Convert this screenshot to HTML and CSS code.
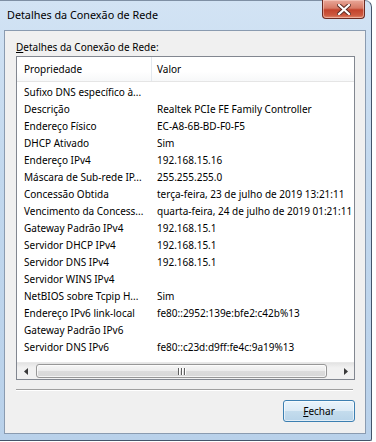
FILE: index.html
```html
<!DOCTYPE html>
<html lang="pt">
<head>
    <meta charset="UTF-8">
    <meta name="viewport" content="width=device-width, initial-scale=1.0">
    <title>Detalhes da Conexão de Rede</title>
    <link rel="stylesheet" href="styles.css">
</head>
<body>
    <div class="window">
        <div class="titlebar">
            <span class="title">Detalhes da Conexão de Rede</span>
            <div class="close-btn">
                <svg width="14" height="11" viewBox="0 0 14 11">
                    <path d="M2 1 L12 10 M12 1 L2 10" stroke="#5a2a22" stroke-width="4" stroke-linecap="square"/>
                    <path d="M2 1 L12 10 M12 1 L2 10" stroke="#ffffff" stroke-width="2.2" stroke-linecap="square"/>
                </svg>
            </div>
        </div>
        <div class="client">
            <div class="label"><u>D</u>etalhes da Conexão de Rede:</div>
            <div class="listbox">
                <div class="list-header">
                    <div class="col-prop">Propriedade</div>
                    <div class="col-val">Valor</div>
                </div>
                <div class="list-rows" id="rows"></div>
                <div class="hscroll">
                    <div class="arrow">
                        <svg width="4" height="7" viewBox="0 0 4 7"><path d="M4 0 L0 3.5 L4 7 Z" fill="#3a3a3a"/></svg>
                    </div>
                    <div class="track">
                        <div class="thumb">
                            <span class="grip"></span><span class="grip"></span><span class="grip"></span>
                        </div>
                    </div>
                    <div class="arrow">
                        <svg width="4" height="7" viewBox="0 0 4 7"><path d="M0 0 L4 3.5 L0 7 Z" fill="#3a3a3a"/></svg>
                    </div>
                </div>
            </div>
            <div class="separator"></div>
            <div class="actions">
                <button class="btn"><u>F</u>echar</button>
            </div>
        </div>
    </div>
    <script>
        const details = [
            ['Sufixo DNS específico à...', ''],
            ['Descrição', 'Realtek PCIe FE Family Controller'],
            ['Endereço Físico', 'EC-A8-6B-BD-F0-F5'],
            ['DHCP Ativado', 'Sim'],
            ['Endereço IPv4', '192.168.15.16'],
            ['Máscara de Sub-rede IP...', '255.255.255.0'],
            ['Concessão Obtida', 'terça-feira, 23 de julho de 2019 13:21:11'],
            ['Vencimento da Concess...', 'quarta-feira, 24 de julho de 2019 01:21:11'],
            ['Gateway Padrão IPv4', '192.168.15.1'],
            ['Servidor DHCP IPv4', '192.168.15.1'],
            ['Servidor DNS IPv4', '192.168.15.1'],
            ['Servidor WINS IPv4', ''],
            ['NetBIOS sobre Tcpip H...', 'Sim'],
            ['Endereço IPv6 link-local', 'fe80::2952:139e:bfe2:c42b%13'],
            ['Gateway Padrão IPv6', ''],
            ['Servidor DNS IPv6', 'fe80::c23d:d9ff:fe4c:9a19%13']
        ];

        const rows = document.getElementById('rows');
        details.forEach(([prop, val]) => {
            const row = document.createElement('div');
            row.className = 'row';
            row.innerHTML = `<div class="col-prop">${prop}</div><div class="col-val">${val}</div>`;
            rows.appendChild(row);
        });
    </script>
</body>
</html>
```

FILE: styles.css
```css
* {
    box-sizing: border-box;
}
body {
    margin: 0;
    background: #ffffff;
    font-family: "Noto Sans", "Open Sans", sans-serif;
    font-size: 10px;
    color: #000;
}
.window {
    width: 372px;
    height: 441px;
    background: linear-gradient(180deg, #d2e3f4 0%, #c2d8ee 40%, #b9d1ea 100%);
    border-right: 1px solid #44546a;
    border-bottom: 1px solid #44546a;
    border-top: 1px solid #7e8fa4;
    border-top-right-radius: 7px;
    border-bottom-right-radius: 2px;
}
.titlebar {
    height: 29px;
    display: flex;
    align-items: flex-start;
    justify-content: space-between;
    padding-left: 7px;
    padding-right: 6px;
}
.title {
    font-size: 10.8px;
    line-height: 14px;
    margin-top: 7px;
}
.close-btn {
    width: 43px;
    height: 19px;
    margin-top: -1px;
    border: 1px solid #6b2b22;
    border-top: none;
    border-radius: 0 0 4px 4px;
    background: linear-gradient(180deg, #e9a899 0%, #d77a66 45%, #c3432c 55%, #cd5a40 85%, #e08a6e 100%);
    box-shadow: inset 0 0 0 1px rgba(255, 220, 210, 0.5);
    display: flex;
    align-items: center;
    justify-content: center;
}
.client {
    margin-left: 4px;
    width: 362px;
    height: 404px;
    background: #f0f0f0;
    border: 1px solid #8a9bb0;
    padding: 9px 11px 0 11px;
}
.label {
    line-height: 14px;
    margin-bottom: 2px;
}
.listbox {
    width: 339px;
    height: 324px;
    background: #ffffff;
    border: 1px solid #828790;
    display: flex;
    flex-direction: column;
}
.list-header {
    height: 25px;
    display: flex;
    align-items: center;
    border-bottom: 1px solid #e5e5e5;
    background: linear-gradient(180deg, #ffffff 0%, #ffffff 60%, #f7f8f9 100%);
}
.list-header .col-prop {
    border-right: 1px solid #e3e8ee;
    height: 100%;
    display: flex;
    align-items: center;
}
.col-prop {
    width: 135px;
    flex: 0 0 135px;
    padding-left: 7px;
    white-space: nowrap;
    overflow: hidden;
}
.col-val {
    padding-left: 5px;
    white-space: nowrap;
}
.list-rows {
    flex: 1;
    overflow: hidden;
    padding-top: 2px;
}
.row {
    display: flex;
    height: 17px;
    line-height: 17px;
}
.hscroll {
    height: 17px;
    display: flex;
    background: linear-gradient(180deg, #e3e3e3 0%, #f1f1f1 30%, #f1f1f1 100%);
    border-top: 1px solid #e8e8e8;
}
.arrow {
    width: 17px;
    flex: 0 0 17px;
    display: flex;
    align-items: center;
    justify-content: center;
}
.track {
    flex: 1;
    padding: 1px 10px 1px 2px;
}
.thumb {
    height: 100%;
    border: 1px solid #979797;
    border-radius: 3px;
    background: linear-gradient(180deg, #f6f6f6 0%, #ececec 50%, #dcdcdc 51%, #d8d8d8 100%);
    box-shadow: inset 0 0 0 1px rgba(255, 255, 255, 0.7);
    display: flex;
    align-items: center;
    justify-content: center;
    gap: 2px;
}
.grip {
    width: 1px;
    height: 7px;
    background: #5f5f5f;
    box-shadow: 1px 0 0 #ffffff;
}
.separator {
    width: 337px;
    margin-top: 9px;
    height: 2px;
    border-top: 1px solid #a0a0a0;
    border-bottom: 1px solid #ffffff;
}
.actions {
    width: 339px;
    display: flex;
    justify-content: flex-end;
    margin-top: 9px;
}
.btn {
    width: 72px;
    height: 22px;
    font-family: inherit;
    font-size: 10px;
    color: #000;
    border: 1px solid #3c7fb1;
    border-radius: 3px;
    background: linear-gradient(180deg, #eaf4fb 0%, #dcebf6 48%, #c4dced 52%, #b8d4e9 100%);
    box-shadow: inset 0 0 0 1px rgba(255, 255, 255, 0.6);
    padding: 0;
}
```
